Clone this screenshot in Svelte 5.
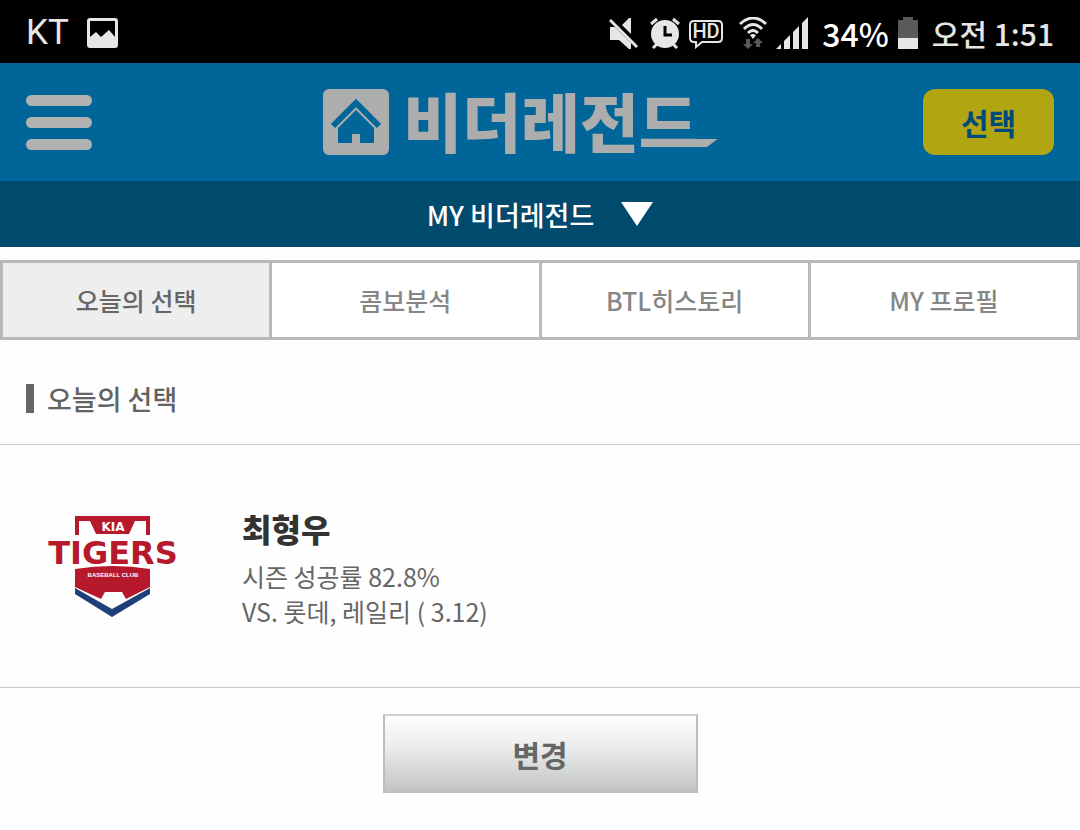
<script>
  let tabs = ["오늘의 선택", "콤보분석", "BTL히스토리", "MY 프로필"];
  let active = $state(0);

  let player = {
    name: "최형우",
    rate: "82.8%",
    versus: "롯데, 레일리 ( 3.12)",
  };
</script>

<div class="status">
  <div class="status-side">
    <span class="carrier">KT</span>
    <svg width="32" height="32" viewBox="0 0 32 32" aria-hidden="true">
      <path fill-rule="evenodd" d="M3 1H28Q31 1 31 4V28Q31 31 28 31H3Q0 31 0 28V4Q0 1 3 1ZM3 4V20L9 15L14 20L22 13L28 20V4Z" />
    </svg>
  </div>
  <div class="status-side icons">
    <svg width="32" height="32" viewBox="0 0 32 32" aria-hidden="true">
      <path d="M1 10H6L22 26V32H20L10 23H1ZM13 8L20 1H22V17Z" />
      <path d="M3 1L30 28" stroke="#000" stroke-width="2" />
      <path d="M1 3L28 30" stroke="#e6e6e6" stroke-width="3" />
    </svg>
    <svg width="32" height="32" viewBox="0 0 32 32" aria-hidden="true">
      <circle cx="16" cy="17" r="14" />
      <path d="M2 7L8 2M24 2L30 7M8 27L4 31M24 27L28 31" stroke="#e6e6e6" stroke-width="3" />
      <path d="M16 9V18H23" fill="none" stroke="#000" stroke-width="3" />
    </svg>
    <svg class="hd" width="34" height="32" viewBox="0 0 34 32" aria-hidden="true">
      <path d="M5 4H29Q33 4 33 8V21Q33 25 29 25H13L7 30V25H5Q1 25 1 21V8Q1 4 5 4Z" fill="none" stroke="#e6e6e6" stroke-width="2" />
      <text x="17" y="21" text-anchor="middle">HD</text>
    </svg>
    <svg width="28" height="32" viewBox="0 0 28 32" aria-hidden="true">
      <path d="M1 7Q14 -5 27 7M5 12Q14 3 23 12M9 16Q14 11 19 16" fill="none" stroke="#e6e6e6" stroke-width="3" />
      <path d="M11 18Q14 16 17 18L14 22Z" />
      <path class="dim" d="M7 22H11V27H14L9 32L4 27H7ZM17 30V26H14L19 21L24 26H21V30Z" />
    </svg>
    <svg width="34" height="32" viewBox="0 0 34 32" aria-hidden="true">
      <path d="M1 32L6 27V32ZM9 24L15 18V32H9ZM18 15L24 9V32H18ZM27 6L33 0V32H27Z" />
    </svg>
    <span class="percent">34%</span>
    <svg width="22" height="32" viewBox="0 0 22 32" aria-hidden="true">
      <path class="dim" d="M1 3H6V0H16V3H21V22H1Z" />
      <path d="M1 21H21V32H1Z" />
    </svg>
    <span class="clock">오전 1:51</span>
  </div>
</div>

<header>
  <button class="menu" aria-label="메뉴">
    <span></span><span></span><span></span>
  </button>
  <a class="logo" href="#home">
    <svg width="66" height="66" viewBox="0 0 66 66" aria-hidden="true">
      <rect width="66" height="66" rx="6" fill="#adadad" />
      <path d="M10 37L33 14L56 37" fill="none" stroke="#00669a" stroke-width="6" />
      <path d="M33 21L51 39V54H37V45H29V54H15V39Z" fill="#00669a" />
    </svg>
    <span class="wordmark">비더레전드</span>
  </a>
  <button class="pick">선택</button>
</header>

<button class="submenu">
  MY 비더레전드
  <svg width="32" height="24" viewBox="0 0 32 24" aria-hidden="true"><path d="M0 0H32L16 24Z" /></svg>
</button>

<nav>
  {#each tabs as tab, i}
    <button class:active={active === i} onclick={() => (active = i)}>{tab}</button>
  {/each}
</nav>

<main>
  <h2>{tabs[0]}</h2>

  <section class="player">
    <svg width="136" height="104" viewBox="0 0 136 104" role="img" aria-label="KIA TIGERS BASEBALL CLUB">
      <path class="red" d="M30 2H105V21H101V7H90L84 20H51L45 7H34V21H30Z" />
      <text class="kia" x="68" y="17" text-anchor="middle">KIA</text>
      <text class="tigers" x="68" y="50" text-anchor="middle">TIGERS</text>
      <path class="red" d="M30 55Q68 49 105 55V73L81 85L77 78H60L56 85L30 73Z" />
      <text class="club" x="68" y="63" text-anchor="middle">BASEBALL CLUB</text>
      <path class="navy" d="M30 74L67 95L105 74V80L67 103L30 80Z" />
    </svg>
    <div class="info">
      <h3>{player.name}</h3>
      <p>시즌 성공률 {player.rate}</p>
      <p>VS. {player.versus}</p>
    </div>
  </section>

  <button class="change">변경</button>
</main>

<style>
  :global(body) {
    margin: 0;
    background: #fefefe;
    font-family: "Noto Sans CJK KR", sans-serif;
  }

  button {
    font-family: inherit;
    border: none;
    padding: 0;
    cursor: pointer;
  }

  svg {
    display: block;
    flex: none;
  }

  .status {
    display: flex;
    justify-content: space-between;
    align-items: center;
    height: 63px;
    padding: 2px 26px 0;
    box-sizing: border-box;
    background: #000;
    color: #e6e6e6;
    fill: #e6e6e6;
    line-height: 32px;
    white-space: nowrap;
  }

  .status-side {
    display: flex;
    align-items: center;
    gap: 18px;
  }

  .icons {
    gap: 8px;
  }

  .carrier {
    font-family: Roboto, sans-serif;
    font-size: 35px;
  }

  .dim {
    fill: #5a5a5a;
  }

  .hd {
    margin-right: 8px;
  }

  .hd text {
    font-family: Roboto, sans-serif;
    font-size: 20px;
    font-weight: 500;
  }

  .percent {
    font-size: 32px;
    font-weight: 500;
    color: #fff;
    margin-left: 5px;
  }

  .clock {
    font-size: 30px;
    font-weight: 500;
    margin-left: 5px;
  }

  header {
    display: flex;
    justify-content: space-between;
    align-items: center;
    height: 118px;
    padding: 0 26px;
    background: #00669a;
  }

  .menu {
    display: flex;
    flex-direction: column;
    gap: 11px;
    width: 66px;
    background: none;
  }

  .menu span {
    height: 11px;
    border-radius: 6px;
    background: #b2b2b2;
  }

  .logo {
    display: flex;
    align-items: center;
    gap: 14px;
    margin-left: 26px;
    padding-right: 20px;
    color: #adadad;
    text-decoration: none;
  }

  .wordmark {
    position: relative;
    margin-bottom: 6px;
    font-size: 64px;
    font-weight: 900;
    line-height: 66px;
    white-space: nowrap;
  }

  /* pointed tail that runs on from the last letter */
  .wordmark::after {
    content: "";
    position: absolute;
    top: 53px;
    right: -20px;
    width: 32px;
    height: 8px;
    background: #adadad;
    clip-path: polygon(0 0, 100% 0, 66% 100%, 0 100%);
  }

  .pick {
    width: 131px;
    height: 66px;
    border-radius: 12px;
    background: #b2a512;
    color: #004a7a;
    font-size: 30px;
    font-weight: 700;
  }

  .submenu {
    display: flex;
    justify-content: center;
    align-items: center;
    gap: 27px;
    width: 100%;
    height: 66px;
    background: #004a6d;
    color: #fff;
    fill: #fff;
    font-size: 27px;
    font-weight: 500;
  }

  nav {
    display: grid;
    grid-template-columns: repeat(4, 1fr);
    gap: 3px;
    margin-top: 13px;
    padding: 3px;
    background: #b9b9b9;
  }

  nav button {
    height: 74px;
    background: #fff;
    color: #868686;
    font-size: 25px;
    font-weight: 500;
  }

  nav button.active {
    background: #eee;
    color: #666;
  }

  h2 {
    display: flex;
    align-items: center;
    gap: 13px;
    margin: 0;
    height: 105px;
    padding: 13px 26px 0;
    box-sizing: border-box;
    border-bottom: 1px solid #c8c8c8;
    color: #636363;
    font-size: 27px;
    font-weight: 500;
  }

  h2::before {
    content: "";
    width: 8px;
    height: 29px;
    background: #666;
  }

  .player {
    display: flex;
    align-items: center;
    gap: 61px;
    height: 242px;
    padding: 0 45px;
    border-bottom: 1px solid #c8c8c8;
  }

  .red {
    fill: #b5192b;
  }

  .navy {
    fill: #1f3f7a;
  }

  .kia {
    fill: #fff;
    font: 700 12px "DejaVu Sans", sans-serif;
  }

  .tigers {
    fill: #b5192b;
    font: 700 32px "DejaVu Sans", sans-serif;
  }

  .club {
    fill: #fff;
    font: 700 6px "Liberation Sans", sans-serif;
  }

  h3 {
    margin: 0 0 6px;
    color: #333;
    font-size: 32px;
    font-weight: 900;
    line-height: 50px;
  }

  p {
    margin: 0;
    color: #666;
    font-size: 25px;
    line-height: 35px;
  }

  .change {
    display: block;
    width: 315px;
    height: 79px;
    margin: 26px auto 37px;
    border: 2px solid #bdbdbd;
    border-top-color: #d0d0d0;
    background: linear-gradient(#fdfefe, #eceded 40%, #c2c3c3);
    color: #666;
    font-size: 30px;
    font-weight: 700;
  }
</style>
